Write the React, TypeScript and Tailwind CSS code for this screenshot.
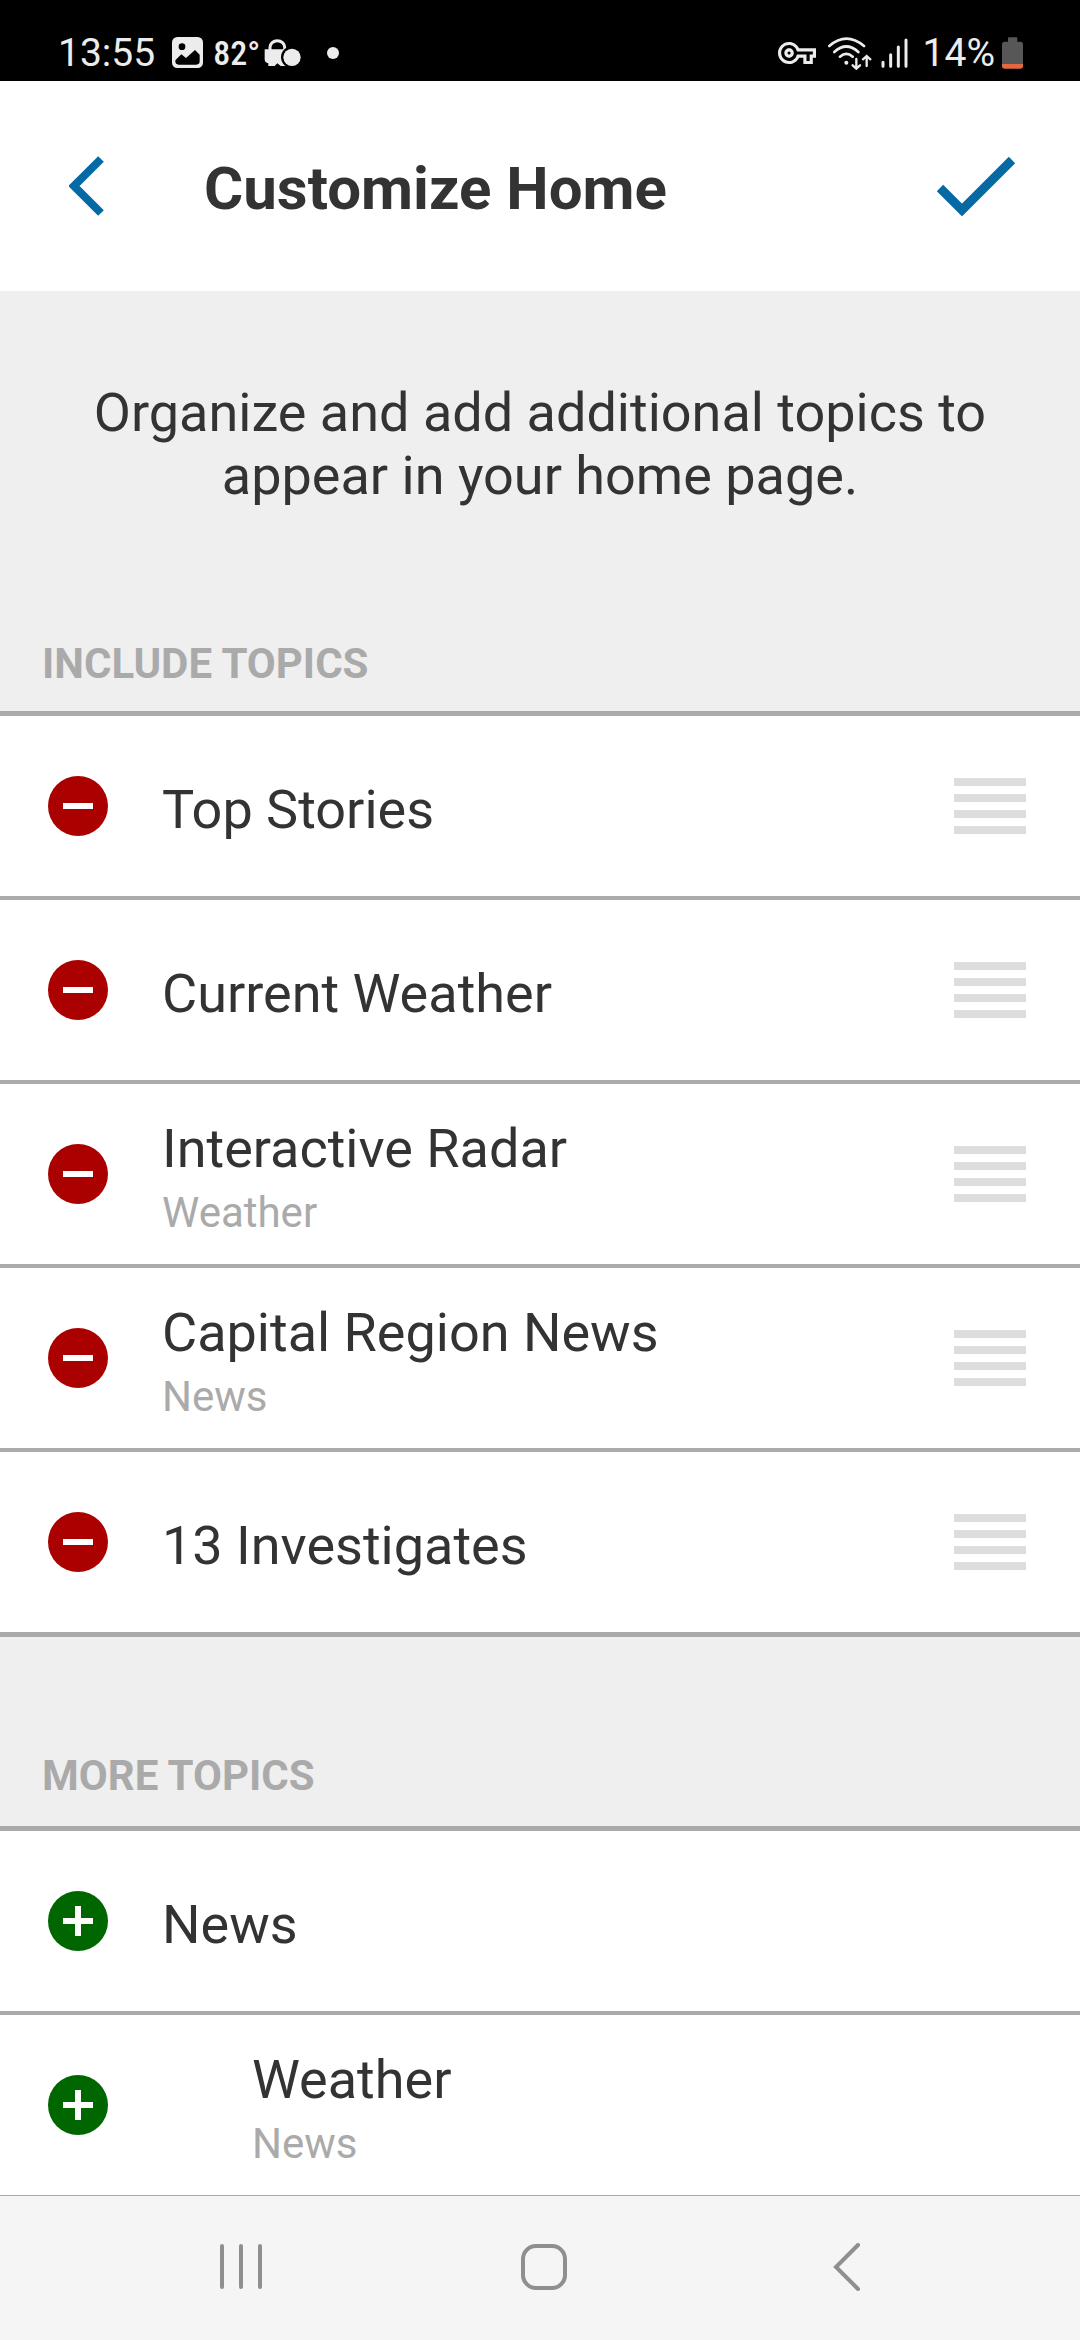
import { MdOutlineVpnKey } from "react-icons/md";

type Topic = { title: string; section?: string; nested?: boolean };

const included: Topic[] = [
  { title: "Top Stories" },
  { title: "Current Weather" },
  { title: "Interactive Radar", section: "Weather" },
  { title: "Capital Region News", section: "News" },
  { title: "13 Investigates" },
];

const more: Topic[] = [
  { title: "News" },
  { title: "Weather", section: "News", nested: true },
];

function StatusBar() {
  return (
    <div className="flex h-[81px] shrink-0 items-center justify-between bg-black pt-6 pr-[57px] pl-[58px] text-[#ececec]">
      <div className="flex items-center">
        <span className="text-[39px] leading-[48px]">13:55</span>
        <svg className="ml-[17px]" width="31" height="31" viewBox="516 111 93 93" aria-label="Picture">
          <rect x="516" y="111" width="93" height="93" rx="16" fill="#ececec" />
          <circle cx="546" cy="140" r="10" fill="#000" />
          <path d="M526 181L544 163L558 174L585 150L599 164V184Q599 194 589 194H536Q526 194 526 184Z" fill="#000" />
        </svg>
        <span className="ml-[10px] font-['Liberation_Sans_Narrow','Roboto_Condensed',Roboto,sans-serif] text-[34px] leading-[48px] font-medium">82°</span>
        <svg className="ml-1" width="37" height="29" viewBox="788 114 111 87" aria-label="Secure">
          <path d="M806 152V142A22 20 0 0 1 850 142V152" fill="none" stroke="#ececec" strokeWidth="9" />
          <path d="M790 148H856V198H838L828 190L820 198H801V190Q790 188 790 178Z" fill="#ececec" />
          <circle cx="872" cy="172" r="33" fill="#000" />
          <circle cx="872" cy="172" r="26" fill="#ececec" />
        </svg>
        <span className="ml-[26px] size-3 rounded-full bg-[#ececec]" />
      </div>
      <div className="flex items-center">
        <MdOutlineVpnKey size={38} aria-label="VPN" />
        <svg className="ml-[11px]" width="46" height="34" viewBox="260 102 138 102" fill="none" stroke="#ececec" strokeWidth="8" strokeLinecap="round" aria-label="Wi-Fi">
          <path d="M267 132Q318 88 371 132M282 150Q318 117 354 150M299 164Q318 147 337 164" />
          <circle cx="318" cy="182" r="6" fill="#ececec" stroke="none" />
          <path d="M348 171V200M337 190L348 200L359 190M379 192V163M368 172L379 162L390 172" strokeWidth="7" />
        </svg>
        <svg className="ml-[7px]" width="30" height="32" viewBox="420 106 90 96" stroke="#ececec" strokeWidth="9" strokeLinecap="round" aria-label="Signal">
          <path d="M429 182V194M452 159V194M475 136V194M498 115V194" />
        </svg>
        <span className="ml-[13px] text-[39px] leading-[48px]">14%</span>
        <svg className="ml-[7px]" width="21" height="32" viewBox="783 108 63 96" aria-label="Battery">
          <path d="M801 122V112Q801 109 804 109H826Q829 109 829 112V122H838Q846 122 846 130V190H783V130Q783 122 791 122Z" fill="#575757" />
          <path d="M783 189H846V195Q846 203 838 203H791Q783 203 783 195Z" fill="#e2693f" />
        </svg>
      </div>
    </div>
  );
}

function TopicRow({ topic, kind }: { topic: Topic; kind: "remove" | "add" }) {
  return (
    <li className="flex h-[180px] items-center bg-white pr-[54px] pl-12">
      <button
        type="button"
        aria-label={kind === "remove" ? `Remove ${topic.title}` : `Add ${topic.title}`}
        className="shrink-0"
      >
        <svg width="60" height="60" viewBox="0 0 60 60">
          <circle cx="30" cy="30" r="30" className={kind === "remove" ? "fill-[#aa0000]" : "fill-[#006600]"} />
          <path d={kind === "remove" ? "M15 27H45V33H15Z" : "M15 27H27V15H33V27H45V33H33V45H27V33H15Z"} fill="#fff" />
        </svg>
      </button>
      <div className={topic.nested ? "ml-36 flex-1 pt-[6px]" : "ml-[54px] flex-1 pt-[6px]"}>
        <div className="text-[54px] leading-[63px] text-[#333333]">{topic.title}</div>
        {topic.section && (
          <div className="mt-2 text-[42px] leading-[49px] text-[#aaaaaa]">{topic.section}</div>
        )}
      </div>
      {kind === "remove" && (
        <button type="button" aria-label={`Reorder ${topic.title}`} className="flex w-[72px] flex-col gap-2">
          <span className="h-2 w-full bg-[#dddddd]" />
          <span className="h-2 w-full bg-[#dddddd]" />
          <span className="h-2 w-full bg-[#dddddd]" />
          <span className="h-2 w-full bg-[#dddddd]" />
        </button>
      )}
    </li>
  );
}

export default function App() {
  return (
    <div className="flex min-h-screen flex-col bg-[#efefef] font-[Roboto,sans-serif]">
      <StatusBar />
      <header className="flex h-[210px] shrink-0 items-center bg-white pr-16 pl-[69px]">
        <button type="button" aria-label="Back">
          <svg width="35" height="60" viewBox="0 0 35 60">
            <path d="M32 3L5 30L32 57" fill="none" stroke="#0569a5" strokeWidth="8" />
          </svg>
        </button>
        <h1 className="ml-[100px] flex-1 pt-[5px] text-[60px] leading-[70px] font-bold text-[#333333]">Customize Home</h1>
        <button type="button" aria-label="Save">
          <svg width="80" height="60" viewBox="0 0 80 60">
            <path d="M4 32L26 54L76 4" fill="none" stroke="#0569a5" strokeWidth="9" />
          </svg>
        </button>
      </header>
      <main className="flex-1">
        <p className="px-[90px] pt-[90px] text-center text-[54px] leading-[63px] text-[#333333]">
          Organize and add additional topics to appear in your home page.
        </p>
        <h2 className="px-[42px] pt-[132px] pb-[23px] text-[42px] leading-[49px] font-bold text-[#aaaaaa]">INCLUDE TOPICS</h2>
        <ul className="divide-y-4 divide-[#aaaaaa] border-y-[5px] border-[#aaaaaa] [&>li]:box-content">
          {included.map((topic) => (
            <TopicRow key={topic.title} topic={topic} kind="remove" />
          ))}
        </ul>
        <h2 className="px-[42px] pt-[114px] pb-[26px] text-[42px] leading-[49px] font-bold text-[#aaaaaa]">MORE TOPICS</h2>
        <ul className="divide-y-4 divide-[#aaaaaa] border-t-[5px] border-[#aaaaaa] [&>li]:box-content">
          {more.map((topic) => (
            <TopicRow key={topic.title} topic={topic} kind="add" />
          ))}
        </ul>
      </main>
      <nav className="grid h-[145px] shrink-0 grid-cols-3 items-center justify-items-center border-t border-[#aaaaaa] bg-[#f5f5f5] pr-[82px] pb-[2px] pl-[90px]">
        <button type="button" aria-label="Recent apps">
          <svg width="48" height="48" viewBox="0 0 48 48" stroke="#8f8f8f" strokeWidth="4" strokeLinecap="round">
            <path d="M5 3V44M24 3V44M43 3V44" />
          </svg>
        </button>
        <button type="button" aria-label="Home">
          <svg width="48" height="48" viewBox="0 0 48 48" fill="none" stroke="#8f8f8f" strokeWidth="4">
            <rect x="3" y="3" width="42" height="42" rx="13" />
          </svg>
        </button>
        <button type="button" aria-label="Back to previous screen">
          <svg width="28" height="48" viewBox="0 0 28 48" fill="none" stroke="#8f8f8f" strokeWidth="4" strokeLinecap="round">
            <path d="M25 2L3 24L25 46" />
          </svg>
        </button>
      </nav>
    </div>
  );
}
